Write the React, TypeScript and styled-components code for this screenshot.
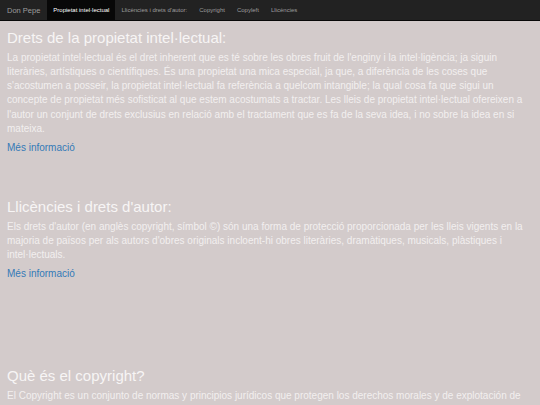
import React from "react";
import styled, { createGlobalStyle } from "styled-components";

const Global = createGlobalStyle`
  html, body { margin: 0; padding: 0; }
  body {
    background: #d3cbcb;
    font-family: "Liberation Sans", Arial, Helvetica, sans-serif;
    color: #f4f2f2;
  }
`;

const Navbar = styled.nav`
  display: flex;
  align-items: stretch;
  height: 20px;
  background: #222222;
  border-bottom: 1px solid #080808;
  padding-left: 7px;
`;

const Brand = styled.a`
  display: flex;
  align-items: center;
  font-size: 7.5px;
  color: #9d9d9d;
  padding-right: 7px;
  text-decoration: none;
`;

const NavItem = styled.a<{ $active?: boolean }>`
  display: flex;
  align-items: center;
  padding: 0 6px;
  font-size: 6px;
  color: ${(p) => (p.$active ? "#ffffff" : "#9d9d9d")};
  background: ${(p) => (p.$active ? "#080808" : "transparent")};
  text-decoration: none;
  white-space: nowrap;
`;

const Container = styled.main`
  padding: 0 7px;
`;

const Section = styled.section`
  height: 169px;
  padding-top: 9px;
  box-sizing: border-box;
`;

const Title = styled.h2`
  margin: 0;
  font-size: 15px;
  font-weight: 400;
  line-height: 1.1;
  color: #f7f5f5;
`;

const Text = styled.p`
  margin: 4px 0 5px;
  font-size: 10px;
  line-height: 1.42857;
  color: #f2efef;
`;

const More = styled.a`
  display: block;
  font-size: 10px;
  line-height: 1.42857;
  color: #337ab7;
  text-decoration: none;
`;

const sections = [
  {
    title: "Drets de la propietat intel·lectual:",
    text:
      "La propietat intel·lectual és el dret inherent que es té sobre les obres fruit de l'enginy i la intel·ligència; ja siguin literàries, artístiques o científiques. És una propietat una mica especial, ja que, a diferència de les coses que s'acostumen a posseir, la propietat intel·lectual fa referència a quelcom intangible; la qual cosa fa que sigui un concepte de propietat més sofisticat al que estem acostumats a tractar. Les lleis de propietat intel·lectual ofereixen a l'autor un conjunt de drets exclusius en relació amb el tractament que es fa de la seva idea, i no sobre la idea en si mateixa.",
  },
  {
    title: "Llicències i drets d'autor:",
    text:
      "Els drets d'autor (en anglès copyright, símbol ©) són una forma de protecció proporcionada per les lleis vigents en la majoria de països per als autors d'obres originals incloent-hi obres literàries, dramàtiques, musicals, plàstiques i intel·lectuals.",
  },
  {
    title: "Què és el copyright?",
    text:
      "El Copyright es un conjunto de normas y principios jurídicos que protegen los derechos morales y de explotación de los autores sobre sus obras, ya sean literarias, artísticas o científicas.",
  },
];

export default function App() {
  return (
    <>
      <Global />
      <Navbar>
        <Brand href="#">Don Pepe</Brand>
        <NavItem href="#" $active>
          Propietat intel·lectual
        </NavItem>
        <NavItem href="#">Llicències i drets d'autor:</NavItem>
        <NavItem href="#">Copyright</NavItem>
        <NavItem href="#">Copyleft</NavItem>
        <NavItem href="#">Llicències</NavItem>
      </Navbar>
      <Container>
        {sections.map((s) => (
          <Section key={s.title}>
            <Title>{s.title}</Title>
            <Text>{s.text}</Text>
            <More href="#">Més informació</More>
          </Section>
        ))}
      </Container>
    </>
  );
}
